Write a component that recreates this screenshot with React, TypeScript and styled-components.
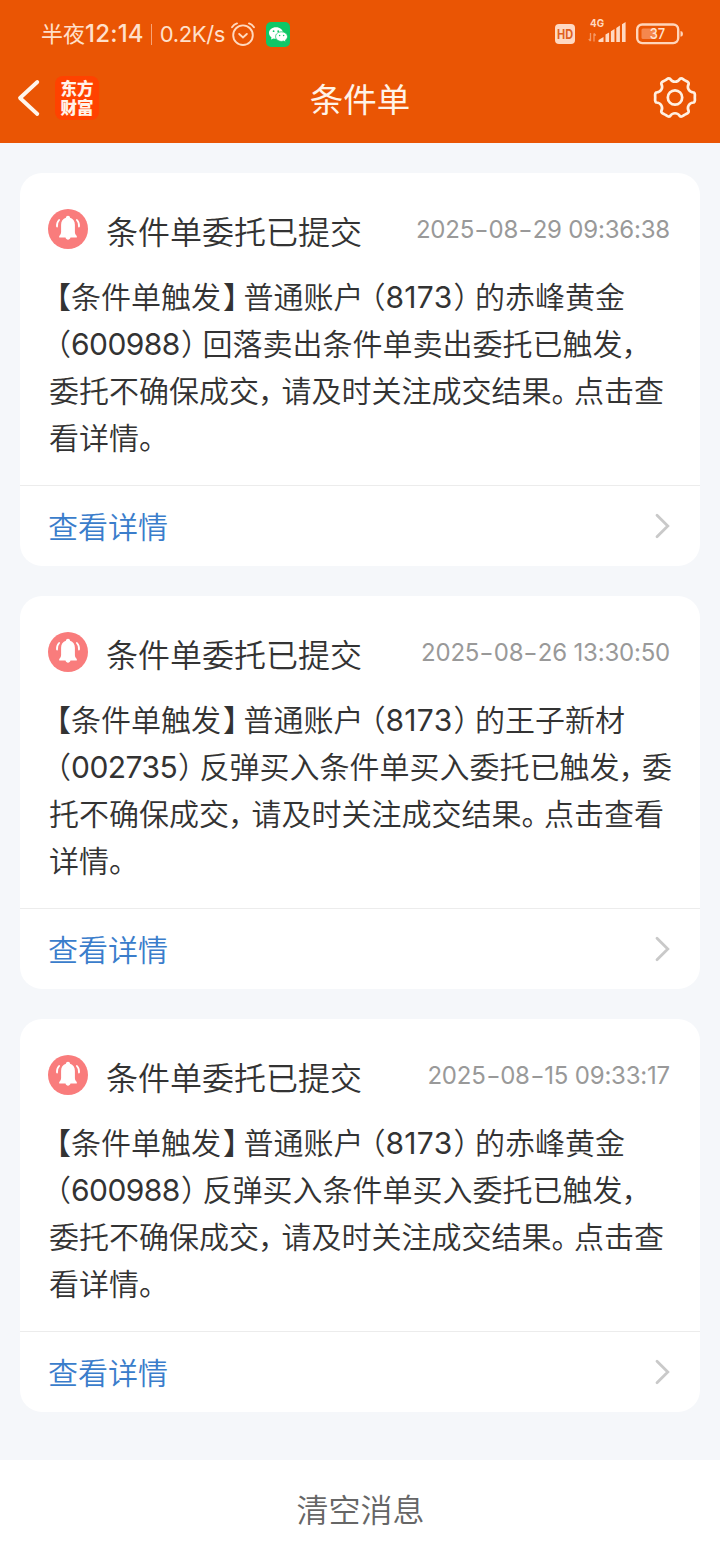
import React from "react";
import styled, { createGlobalStyle } from "styled-components";

const sans = `Inter, "Noto Sans CJK SC", sans-serif`;

const GlobalStyle = createGlobalStyle`
  * { box-sizing: border-box; }
  body { margin: 0; background: #f5f7fa; font-family: ${sans}; color: #333; }
`;

const Screen = styled.div`
  width: 720px;
  height: 1560px;
  display: flex;
  flex-direction: column;
  overflow: hidden;
  background: #f5f7fa;
`;

const Header = styled.header`
  height: 143px;
  flex: none;
  background: #ea5504;
  display: flex;
  flex-direction: column;
`;

const StatusBar = styled.div`
  height: 52px;
  padding: 16px 36px 0 41px;
  display: flex;
  justify-content: space-between;
  color: #ffe0cb;
`;

const StatusGroup = styled.div`
  height: 36px;
  display: flex;
  align-items: center;
`;

const StatusText = styled.span<{ $size: number; $spacing?: number }>`
  font-size: ${(p) => p.$size}px;
  letter-spacing: ${(p) => p.$spacing ?? 0}px;
  line-height: 36px;
  white-space: nowrap;
  font-weight: 400;
`;

const Clock = styled.span`
  font-size: 24px;
  letter-spacing: 0.2px;
  font-weight: 450;
`;

const Separator = styled.i`
  width: 1px;
  height: 21px;
  margin: 0 8px 0 7px;
  background: #f7a477;
`;

const NavBar = styled.div`
  height: 91px;
  padding: 0 23px 0 16px;
  display: grid;
  grid-template-columns: 150px 1fr 150px;
  align-items: center;
`;

const NavSide = styled.div<{ $end?: boolean }>`
  display: flex;
  align-items: center;
  justify-content: ${(p) => (p.$end ? "flex-end" : "flex-start")};
`;

const NavTitle = styled.h1`
  margin: 4px 0 0 7px;
  text-align: center;
  color: #fff3e8;
  font-size: 33.5px;
  line-height: 48px;
  font-weight: 400;
`;

const Logo = styled.div`
  width: 44px;
  height: 44px;
  margin-left: 15px;
  border-radius: 8px;
  background: #ff4200;
  color: #fff3ea;
  font-family: "Noto Sans CJK SC", sans-serif;
  font-size: 16.5px;
  line-height: 19px;
  font-weight: 900;
  text-align: center;
  padding-top: 3px;
`;

const List = styled.main`
  flex: 1;
  padding: 30px 20px 0;
  display: flex;
  flex-direction: column;
  gap: 30px;
`;

const Card = styled.article`
  height: 393px;
  border-radius: 22px;
  background: #fff;
  display: flex;
  flex-direction: column;
`;

const CardHead = styled.div`
  height: 101px;
  padding: 11px 30px 0 28px;
  display: flex;
  align-items: center;
`;

const CardTitle = styled.h2`
  margin: 8px 0 0 18px;
  font-size: 32px;
  line-height: 44px;
  font-weight: 350;
`;

const Time = styled.time`
  margin-left: auto;
  padding-top: 1px;
  font-size: 24px;
  letter-spacing: -0.2px;
  line-height: 36px;
  color: #999;
  white-space: nowrap;
`;

const Dash = styled.span`
  display: inline-block;
  width: 14.5px;
  text-align: center;
  transform: scaleX(1.3);
`;

const Body = styled.div`
  height: 212px;
  flex: none;
  padding-left: 29px;
  border-bottom: 1px solid #ececec;
`;

const Line = styled.div`
  font-size: 30px;
  line-height: 47px;
  font-weight: 350;
  white-space: nowrap;
`;

const Opening = styled.span`
  font-feature-settings: "halt";
  margin-left: 7px;
`;

const Closing = styled.span<{ $shift: number }>`
  font-feature-settings: "halt";
  margin-left: ${(p) => p.$shift}px;
  margin-right: ${(p) => 7.5 - p.$shift}px;
`;

const Digits = styled.span<{ $spacing: number }>`
  letter-spacing: ${(p) => p.$spacing}px;
  font-weight: 380;
`;

const CardLink = styled.a`
  flex: 1;
  padding: 0 30px 0 29px;
  display: flex;
  align-items: center;
  justify-content: space-between;
  font-size: 30px;
  font-weight: 350;
  color: #3a7dcb;
`;

const LinkText = styled.span`
  margin: 0 0 3px -1px;
`;

const Footer = styled.footer`
  height: 100px;
  flex: none;
  padding-left: 1px;
  background: #fff;
  color: #666;
  font-size: 32px;
  font-weight: 350;
  line-height: 102px;
  text-align: center;
`;

const AlarmIcon = () => (
  <svg width="24" height="26" viewBox="0 0 24 26" fill="none" stroke="#ffd9bf" strokeWidth="1.9" strokeLinecap="round">
    <circle cx="12" cy="14.2" r="9.8" />
    <path d="M8.2 13l3.8 3.400 3.8-3.400M1 6.2Q3 3.4 6 2.4M23 6.2Q21 3.4 18 2.4" />
  </svg>
);

const WeChatIcon = () => (
  <svg width="24" height="25" viewBox="0 0 24 25">
    <rect width="24" height="25" rx="5" fill="#0fc767" />
    <path fill="#fff" d="M10 5.2c-4 0-7 2.5-7 5.8 0 1.8 1 3.400 2.500 4.500L5 17.600l2.500-1.200c.9.3 1.600.4 2.500.4 4 0 7-2.500 7-5.800s-3-5.800-7-5.800z" />
    <path fill="#fff" stroke="#0fc767" strokeWidth=".8" d="M15.600 9.800c-3.400 0-6 2.100-6 4.800s2.600 4.800 6 4.800c.7 0 1.400-.1 2-.3l2.200 1.100-.5-1.900c1.400-.9 2.200-2.200 2.200-3.700 0-2.700-2.600-4.800-5.900-4.800z" />
    <g fill="#0fc767"><circle cx="7.600" cy="9.200" r=".9" /><circle cx="12.200" cy="9.200" r=".9" /><circle cx="13.600" cy="13.400" r=".75" /><circle cx="17.600" cy="13.400" r=".75" /></g>
  </svg>
);

const HdIcon = () => (
  <svg width="20" height="20" viewBox="0 0 20 20">
    <rect width="20" height="20" rx="4" fill="#ffd9c2" />
    <text x="10" y="14.600" textAnchor="middle" textLength="16" lengthAdjust="spacingAndGlyphs" fontFamily="Inter, sans-serif" fontSize="12.800" fontWeight="700" fill="#e0601f">HD</text>
  </svg>
);

const SignalIcon = () => (
  <svg width="39" height="26" viewBox="0 0 39 26" fill="#ffd9c2">
    <text x="2" y="9.200" textLength="14" lengthAdjust="spacingAndGlyphs" fontFamily="Inter, sans-serif" fontSize="10.500" fontWeight="700">4G</text>
    <path d="M10.500 24v-2l5-3v5zM17.500 24v-7.500l3.600-2V24zM22.900 24V13.300l3.600-2.300v13zM28.300 24V10l3.600-2.500V24zM34 24V6.200L37.600 4v20z" />
    <path d="M2.500 15v8M.8 21l1.700 2.200M6 23.500v-8M6 15.500l1.700 2" fill="none" stroke="#f49a68" strokeWidth="1.300" />
  </svg>
);

const BatteryIcon = () => (
  <svg width="48" height="22" viewBox="0 0 48 22">
    <rect x="1.200" y="1.500" width="41" height="18.600" rx="5" fill="none" stroke="#ffd5bb" strokeWidth="2.400" />
    <rect x="5.500" y="5.500" width="14" height="10.500" rx="1.500" fill="#f5874d" />
    <path d="M44.500 8q2.500.3 2.500 2.900t-2.500 2.900z" fill="#ffd5bb" />
    <text x="21.500" y="16.200" textAnchor="middle" textLength="15.500" lengthAdjust="spacingAndGlyphs" fontFamily="Inter, sans-serif" fontSize="15" fontWeight="500" fill="#ffe3d1">37</text>
  </svg>
);

const BackIcon = () => (
  <svg width="24" height="38" viewBox="0 0 24 38" fill="none" stroke="#fff6ec" strokeWidth="3.800" strokeLinecap="round" strokeLinejoin="round">
    <path d="M21.300 3L4 19l17.300 16" />
  </svg>
);

const polar = (deg: number, r: number) => {
  const a = (deg * Math.PI) / 180;
  return `${(22 + r * Math.cos(a)).toFixed(2)} ${(22 + r * Math.sin(a)).toFixed(2)}`;
};

const gearPath =
  `M${polar(-15, 19.4)}` +
  [0, 60, 120, 180, 240, 300]
    .map(
      (a) =>
        `C${polar(a - 11, 21)} ${polar(a - 5, 19.8)} ${polar(a, 19.8)}` +
        `C${polar(a + 5, 19.8)} ${polar(a + 11, 21)} ${polar(a + 15, 19.4)}` +
        `C${polar(a + 20, 15)} ${polar(a + 40, 15)} ${polar(a + 45, 19.4)}`
    )
    .join("") +
  "Z";

const GearIcon = () => (
  <svg width="44" height="44" viewBox="0 0.500 44 44" fill="none" stroke="#fff0e2" strokeWidth="2.700" strokeLinejoin="round">
    <path d={gearPath} />
    <circle cx="22" cy="22" r="7.200" />
  </svg>
);

const BellIcon = () => (
  <svg width="40" height="40" viewBox="0 0 40 40">
    <circle cx="20" cy="20" r="20" fill="#f97c7c" />
    <path fill="#fff" d="M20 6.800c1.200 0 2 .8 2.100 1.900 3 1 4.800 3.600 4.800 7v7c0 1.900.5 3 1.900 4.200v1.600h-6.300c-.4 1.400-1.300 2.200-2.500 2.200s-2.100-.8-2.500-2.200h-6.300v-1.600c1.400-1.200 1.900-2.300 1.900-4.200v-7c0-3.400 1.800-6 4.800-7 .1-1.100.9-1.900 2.100-1.900z" />
    <path d="M11.100 11q-2.500 2.700-2.100 6.500M28.900 11q2.500 2.700 2.100 6.500" fill="none" stroke="#fff" strokeWidth="1.800" strokeLinecap="round" />
  </svg>
);

const ChevronIcon = () => (
  <svg width="15" height="26" viewBox="0 0 15 26" fill="none" stroke="#c9c9c9" strokeWidth="2.800" strokeLinecap="round">
    <path d="M2 2.200L12.800 13 2 23.800" />
  </svg>
);

const closingShift: Record<string, number> = { "，": -1, "）": 1, "】": 2, "。": 0 };

const RichLine = ({ text }: { text: string }) => (
  <Line>
    {text.split(/([【（]|[】），。]|\d+)/).map((part, i) => {
      if (/^[【（]$/.test(part)) return <Opening key={i}>{part}</Opening>;
      if (part in closingShift)
        return <Closing key={i} $shift={closingShift[part]}>{part}</Closing>;
      if (/^\d+$/.test(part)) return <Digits key={i} $spacing={part.length > 4 ? -0.55 : 0.3}>{part}</Digits>;
      return part;
    })}
  </Line>
);

type Notice = { time: string; lines: string[] };

const notices: Notice[] = [
  {
    time: "2025-08-29 09:36:38",
    lines: [
      "【条件单触发】普通账户（8173）的赤峰黄金",
      "（600988）回落卖出条件单卖出委托已触发，",
      "委托不确保成交，请及时关注成交结果。点击查",
      "看详情。",
    ],
  },
  {
    time: "2025-08-26 13:30:50",
    lines: [
      "【条件单触发】普通账户（8173）的王子新材",
      "（002735）反弹买入条件单买入委托已触发，委",
      "托不确保成交，请及时关注成交结果。点击查看",
      "详情。",
    ],
  },
  {
    time: "2025-08-15 09:33:17",
    lines: [
      "【条件单触发】普通账户（8173）的赤峰黄金",
      "（600988）反弹买入条件单买入委托已触发，",
      "委托不确保成交，请及时关注成交结果。点击查",
      "看详情。",
    ],
  },
];

const NoticeCard = ({ time, lines }: Notice) => (
  <Card>
    <CardHead>
      <BellIcon />
      <CardTitle>条件单委托已提交</CardTitle>
      <Time>{time.split(/(-)/).map((t, i) => (t === "-" ? <Dash key={i}>-</Dash> : t))}</Time>
    </CardHead>
    <Body>
      {lines.map((l) => (
        <RichLine key={l} text={l} />
      ))}
    </Body>
    <CardLink>
      <LinkText>查看详情</LinkText>
      <ChevronIcon />
    </CardLink>
  </Card>
);

const SpacedIcon = styled.span<{ $left: number; $top?: number }>`
  display: flex;
  margin-left: ${(p) => p.$left}px;
  margin-top: ${(p) => p.$top ?? 0}px;
`;

export default function App() {
  return (
    <Screen>
      <GlobalStyle />
      <Header>
        <StatusBar>
          <StatusGroup>
            <StatusText $size={22}>半夜<Clock>12:14</Clock></StatusText>
            <Separator />
            <StatusText $size={22} $spacing={-0.35}>0.2K/s</StatusText>
            <SpacedIcon $left={6}><AlarmIcon /></SpacedIcon>
            <SpacedIcon $left={11}><WeChatIcon /></SpacedIcon>
          </StatusGroup>
          <StatusGroup>
            <HdIcon />
            <SpacedIcon $left={13} $top={-6}><SignalIcon /></SpacedIcon>
            <SpacedIcon $left={9}><BatteryIcon /></SpacedIcon>
          </StatusGroup>
        </StatusBar>
        <NavBar>
          <NavSide>
            <BackIcon />
            <Logo>东方<br />财富</Logo>
          </NavSide>
          <NavTitle>条件单</NavTitle>
          <NavSide $end><GearIcon /></NavSide>
        </NavBar>
      </Header>
      <List>
        {notices.map((n) => (
          <NoticeCard key={n.time} {...n} />
        ))}
      </List>
      <Footer>清空消息</Footer>
    </Screen>
  );
}
